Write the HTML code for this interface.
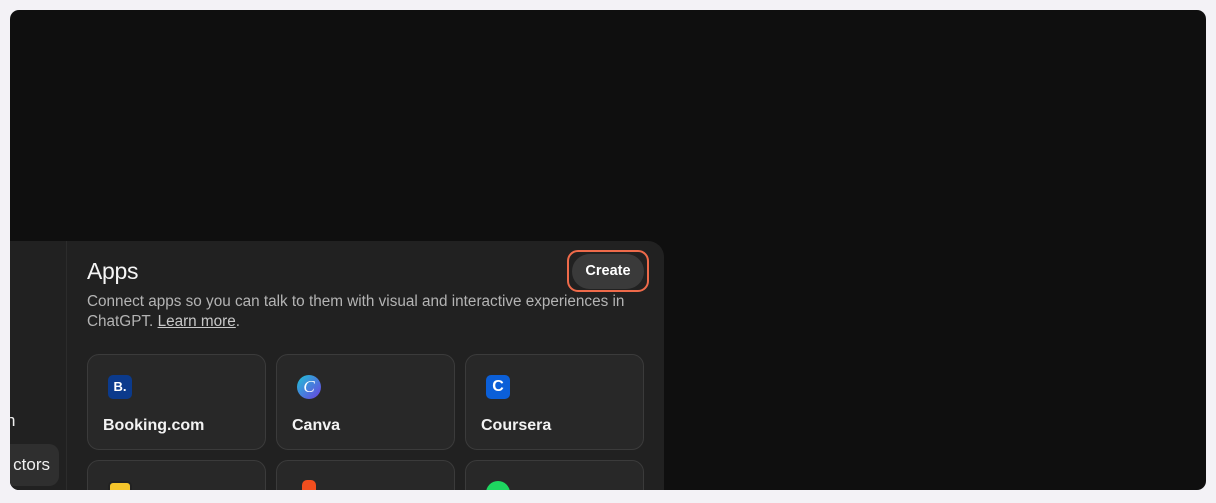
<!DOCTYPE html>
<html><head><meta charset="utf-8"><style>
*{box-sizing:border-box;margin:0;padding:0}
html,body{width:1216px;height:503px;overflow:hidden}
body{background:#f3f2f6;font-family:"Liberation Sans",sans-serif;position:relative}
.panel{position:absolute;left:10px;top:10px;width:1196px;height:480px;background:#0f0f0f;border-radius:9px;overflow:hidden}
.modal{position:absolute;left:0;top:231px;width:654px;height:249px;background:#212121;border-top-right-radius:16px;overflow:hidden}
.side{position:absolute;left:0;top:0;width:57px;height:100%;border-right:1px solid #2c2c2c}
.sn{position:absolute;left:-4px;top:170px;color:#f0f0f0;font-size:17px}
.pill{position:absolute;left:-10px;top:203px;width:59px;height:42px;background:#2f2f2f;border-radius:10px;color:#f0f0f0;font-size:17px;line-height:42px;text-align:right;padding-right:9px}
h1{position:absolute;left:77px;top:17px;color:#f5f5f5;font-size:23px;font-weight:normal;letter-spacing:-0.3px}
.desc{position:absolute;left:77px;top:51px;width:560px;color:#b4b4b4;font-size:15.3px;line-height:20px}
.desc u{color:#c8c8c8}
.ring{position:absolute;left:557px;top:9px;width:82px;height:42px;border:2.5px solid #ee6a4a;border-radius:11px}
.btn{position:absolute;left:562px;top:13px;width:72px;height:35px;background:#3a3a3a;border-radius:18px;color:#fff;font-size:14.5px;font-weight:bold;line-height:35px;text-align:center}
.card{position:absolute;width:179px;height:96px;background:#282828;border:1px solid #3b3b3b;border-radius:12px;overflow:hidden}
.card .t{position:absolute;left:15px;top:62px;color:#f3f3f3;font-size:16px;font-weight:bold}
.ic{position:absolute;left:20px;top:20px;width:24px;height:24px;border-radius:5px;color:#fff;font-weight:bold;font-size:13px;text-align:center;line-height:24px}
</style></head><body>
<div class="panel">
<div class="modal">
<div class="side"><div class="sn">n</div><div class="pill">ctors</div></div>
<h1>Apps</h1>
<div class="ring"></div><div class="btn">Create</div>
<div class="desc">Connect apps so you can talk to them with visual and interactive experiences in ChatGPT. <u>Learn more</u>.</div>
<div class="card" style="left:77px;top:113px"><div class="ic" style="background:#0b3a8c">B.</div><div class="t">Booking.com</div></div>
<div class="card" style="left:266px;top:113px"><div class="ic" style="border-radius:50%;background:linear-gradient(135deg,#1fc3d6,#6b3fe0);font-family:'Liberation Serif',serif;font-style:italic;font-weight:normal;font-size:17px">C</div><div class="t">Canva</div></div>
<div class="card" style="left:455px;top:113px"><div class="ic" style="background:#0b5fd8;font-size:16px">C</div><div class="t">Coursera</div></div>
<div class="card" style="left:77px;top:219px"><div class="ic" style="background:#f5c52b;top:20px;border:2px solid #222"></div></div>
<div class="card" style="left:266px;top:219px"><div class="ic" style="background:#f24e1e;width:14px;left:25px;top:19px;border-radius:5px"></div></div>
<div class="card" style="left:455px;top:219px"><div class="ic" style="background:#1ed760;border-radius:50%;top:20px"></div></div>
</div>
</div>
</body></html>
